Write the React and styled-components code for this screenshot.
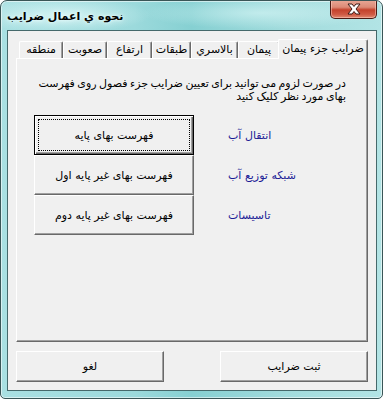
import React from 'react';
import styled, { createGlobalStyle, css } from 'styled-components';

const Global = createGlobalStyle`
  html, body { margin: 0; padding: 0; background: #ffffff; }
  body { width: 383px; height: 399px; overflow: hidden; font-family: "DejaVu Sans", sans-serif; }
  * { box-sizing: border-box; }
`;

const Window = styled.div`
  width: 383px;
  height: 399px;
  border: 1px solid #3a5657;
  border-radius: 7px 7px 5px 5px;
  background:
    radial-gradient(ellipse 90px 18px at 60px 14px, rgba(225,250,250,0.75), rgba(225,250,250,0) 100%),
    radial-gradient(ellipse 120px 16px at 260px 12px, rgba(220,248,248,0.6), rgba(220,248,248,0) 100%),
    linear-gradient(90deg, #a9e0e2 0%, #9cdadc 35%, #86d0d2 50%, #a2dcdd 75%, #b2e4e5 100%);
  box-shadow: inset 0 0 0 1px rgba(255,255,255,0.55);
  display: flex;
  flex-direction: column;
  overflow: hidden;
`;

const TitleBar = styled.div`
  height: 29px;
  flex: none;
  display: flex;
  align-items: flex-start;
  justify-content: space-between;
  padding-left: 6px;
  padding-right: 5px;
`;

const Title = styled.div`
  margin-top: 9px;
  font-size: 11px;
  font-weight: bold;
  color: #000;
  direction: rtl;
  text-shadow: 0 0 6px #eafcfc, 0 0 3px #eafcfc;
  line-height: 14px;
`;

const CloseButton = styled.div`
  width: 47px;
  height: 19px;
  margin-top: -1px;
  border: 1px solid #4a1b14;
  border-top: none;
  border-radius: 0 0 5px 5px;
  background: linear-gradient(180deg, #e9a897 0%, #dc8a76 40%, #c4422c 55%, #cf5a44 80%, #e18a70 100%);
  box-shadow: inset 0 0 0 1px rgba(255,210,200,0.5);
  display: flex;
  align-items: center;
  justify-content: center;
`;

const Client = styled.div`
  flex: none;
  height: 361px;
  margin: 0 5px 0 6px;
  border: 1px solid #45696b;
  background: #f0f0f0;
  padding: 8px 8px 8px 8px;
  display: flex;
  flex-direction: column;
  gap: 9px;
`;

const TabControl = styled.div`
  height: 303px;
  display: flex;
  flex-direction: column;
`;

const TabRow = styled.div`
  height: 19px;
  display: flex;
  flex-direction: row-reverse;
  align-items: flex-end;
  padding-right: 2px;
  position: relative;
  z-index: 2;
`;

const Tab = styled.div`
  width: ${p => p.$w}px;
  height: 17px;
  background: #f0f0f0;
  border-top: 1px solid #ffffff;
  border-left: 1px solid #ffffff;
  border-right: 1px solid #696969;
  box-shadow: inset -1px 0 0 #a0a0a0;
  border-radius: 2px 2px 0 0;
  font-size: 11px;
  line-height: 15px;
  color: #000;
  direction: rtl;
  text-align: center;
  white-space: nowrap;
  ${p => p.$active && css`
    height: 20px;
    margin: 0 -2px -1px -2px;
    width: ${p.$w + 4}px;
    position: relative;
    z-index: 3;
    line-height: 17px;
  `}
`;

const Pane = styled.div`
  flex: 1;
  background: #f0f0f0;
  border-top: 1px solid #ffffff;
  border-left: 1px solid #ffffff;
  border-right: 1px solid #696969;
  border-bottom: 1px solid #696969;
  box-shadow: inset -1px -1px 0 #a0a0a0;
  padding: 18px 21px 0 17px;
  display: flex;
  flex-direction: column;
`;

const Instruction = styled.p`
  margin: 0 0 0 -20px;
  direction: rtl;
  text-align: right;
  font-size: 11px;
  line-height: 13px;
  word-spacing: -1px;
  color: #000;
  white-space: nowrap;
`;

const Rows = styled.div`
  margin-top: 12px;
  display: flex;
  flex-direction: column;
`;

const Row = styled.div`
  display: flex;
  align-items: center;
  height: 40px;
`;

const classicButton = css`
  background: #f0f0f0;
  border-top: 1px solid #ffffff;
  border-left: 1px solid #ffffff;
  border-right: 1px solid #696969;
  border-bottom: 1px solid #696969;
  box-shadow: inset -1px -1px 0 #a0a0a0;
  font-family: "DejaVu Sans", sans-serif;
  font-size: 11px;
  color: #000;
  direction: rtl;
  display: flex;
  align-items: center;
  justify-content: center;
  padding: 0;
  position: relative;
`;

const ListButton = styled.button`
  ${classicButton}
  width: 160px;
  height: 40px;
  flex: none;
  ${p => p.$focused && css`
    border: 1px solid #000;
    box-shadow: inset 1px 1px 0 #ffffff, inset -1px -1px 0 #696969, inset -2px -2px 0 #a0a0a0;
    &::after {
      content: '';
      position: absolute;
      left: 3px;
      top: 3px;
      right: 3px;
      bottom: 3px;
      border: 1px dotted #000;
    }
  `}
`;

const Label = styled.span`
  margin-left: 34px;
  font-size: 11px;
  color: #1c1c96;
  direction: rtl;
  white-space: nowrap;
`;

const Footer = styled.div`
  height: 31px;
  display: flex;
  justify-content: space-between;
`;

const FooterButton = styled.button`
  ${classicButton}
  width: 148px;
  height: 31px;
`;

const CloseIcon = () => (
  <svg width="18" height="12" viewBox="0 0 18 12">
    <path d="M3 1 L7 1 L9 3.5 L11 1 L15 1 L11 6 L15 11 L11 11 L9 8.5 L7 11 L3 11 L7 6 Z"
      fill="#ffffff" stroke="#3d1a15" strokeWidth="1" strokeLinejoin="round" />
  </svg>
);

const tabs = [
  { t: 'ضرايب جزء پيمان', w: 86, active: true },
  { t: 'پيمان', w: 42 },
  { t: 'بالاسري', w: 47 },
  { t: 'طبقات', w: 39 },
  { t: 'ارتفاع', w: 45 },
  { t: 'صعوبت', w: 44 },
  { t: 'منطقه', w: 44 },
];

const rows = [
  { label: 'انتقال آب', button: 'فهرست بهای پايه', focused: true },
  { label: 'شبکه توزيع آب', button: 'فهرست بهای غير پايه اول' },
  { label: 'تاسيسات', button: 'فهرست بهای غير پايه دوم' },
];

export default function App() {
  return (
    <>
      <Global />
      <Window>
        <TitleBar>
          <Title>نحوه ي اعمال ضرايب</Title>
          <CloseButton><CloseIcon /></CloseButton>
        </TitleBar>
        <Client>
          <TabControl>
            <TabRow>
              {tabs.map(tb => (
                <Tab key={tb.t} $w={tb.w} $active={tb.active}>{tb.t}</Tab>
              ))}
            </TabRow>
            <Pane>
              <Instruction>
                در صورت لزوم می توانيد برای تعيين ضرايب جزء فصول روی فهرست
                <br />
                بهای مورد نظر کليک کنيد
              </Instruction>
              <Rows>
                {rows.map(r => (
                  <Row key={r.label}>
                    <ListButton $focused={r.focused}>{r.button}</ListButton>
                    <Label>{r.label}</Label>
                  </Row>
                ))}
              </Rows>
            </Pane>
          </TabControl>
          <Footer>
            <FooterButton>لغو</FooterButton>
            <FooterButton>ثبت ضرايب</FooterButton>
          </Footer>
        </Client>
      </Window>
    </>
  );
}
